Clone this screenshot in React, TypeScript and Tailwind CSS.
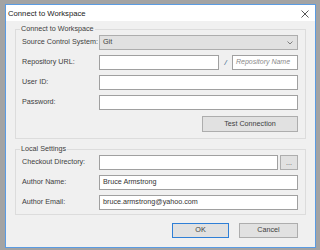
import React from 'react';

const font = { fontFamily: '"Liberation Sans", Arial, sans-serif' };

function Row({ label, children }: { label: string; children: React.ReactNode }) {
  return (
    <div className="flex items-center h-[15px]">
      <span className="w-[77px] shrink-0 whitespace-nowrap text-[7.2px] text-[#404040]">{label}</span>
      <div className="flex-1 flex items-center h-full">{children}</div>
    </div>
  );
}

function TextBox({ value, className = '' }: { value?: string; className?: string }) {
  return (
    <div className={`h-[15px] bg-white border border-[#a0a0a0] flex items-center pl-[3px] whitespace-nowrap text-[7.2px] text-[#333] ${className}`}>
      {value}
    </div>
  );
}

export default function App() {
  return (
    <div className="w-[320px] h-[250px] bg-[#a3a3a3] pt-[4px] pl-[5px]" style={font}>
      <div className="w-[311px] h-[244px] border border-[#5a9be2] bg-[#f0f0f0] flex flex-col">
        <div className="h-[16px] bg-white flex items-center justify-between pl-[2px] pr-[6px] pt-[1px]">
          <span className="text-[7.7px] text-[#222]">Connect to Workspace</span>
          <svg width="8" height="8" viewBox="0 0 8 8">
            <path d="M0.5 0.5 L7.5 7.5 M7.5 0.5 L0.5 7.5" stroke="#444" strokeWidth="0.9" />
          </svg>
        </div>

        <div className="pl-[9px] pt-[3px]">
          <fieldset className="w-[291px] border border-[#dcdcdc] pl-[6px] pr-[7px] pt-[1px] pb-[6px]">
            <legend className="ml-[-2px] px-[1px] text-[7.2px] leading-[10px] text-[#404040]">
              Connect to Workspace
            </legend>
            <div className="flex flex-col gap-[5px]">
              <Row label="Source Control System:">
                <div className="flex-1 h-[15px] bg-[#e1e1e1] border border-[#adadad] flex items-center justify-between pl-[3px] pr-[4px] text-[7.2px] text-[#404040]">
                  <span>Git</span>
                  <svg width="6" height="4" viewBox="0 0 6 4">
                    <path d="M0.5 0.5 L3 3 L5.5 0.5" fill="none" stroke="#666" strokeWidth="0.8" />
                  </svg>
                </div>
              </Row>
              <Row label="Repository URL:">
                <TextBox className="flex-1" />
                <span className="w-[13px] text-center text-[8px] italic text-[#3a5f8a]">/</span>
                <div className="w-[66px] h-[15px] bg-white border border-[#a0a0a0] flex items-center pl-[3px] whitespace-nowrap text-[7px] italic text-[#8a8a8a]">
                  Repository Name
                </div>
              </Row>
              <Row label="User ID:">
                <TextBox className="flex-1" />
              </Row>
              <Row label="Password:">
                <TextBox className="flex-1" />
              </Row>
            </div>
            <div className="flex justify-end mt-[6px]">
              <button className="w-[96px] h-[16px] bg-[#e1e1e1] border border-[#adadad] text-[7.2px] text-[#404040]">
                Test Connection
              </button>
            </div>
          </fieldset>

          <fieldset className="w-[291px] mt-[5px] border border-[#dcdcdc] pl-[6px] pr-[7px] pt-[1px] pb-[4px]">
            <legend className="ml-[-2px] px-[1px] text-[7.2px] leading-[10px] text-[#404040]">
              Local Settings
            </legend>
            <div className="flex flex-col gap-[5px]">
              <Row label="Checkout Directory:">
                <TextBox className="flex-1" />
                <button className="ml-[2px] w-[18px] h-[15px] bg-[#e1e1e1] border border-[#adadad] text-[7px] leading-[7px] text-[#555]">
                  ...
                </button>
              </Row>
              <Row label="Author Name:">
                <TextBox className="flex-1" value="Bruce Armstrong" />
              </Row>
              <Row label="Author Email:">
                <TextBox className="flex-1" value="bruce.armstrong@yahoo.com" />
              </Row>
            </div>
          </fieldset>

          <div className="w-[291px] flex justify-end gap-[10px] pr-[8px] mt-[8px]">
            <button className="w-[57px] h-[15px] bg-[#e1e1e1] border border-[#2f7fd6] text-[7.2px] text-[#404040]">
              OK
            </button>
            <button className="w-[59px] h-[15px] bg-[#e1e1e1] border border-[#adadad] text-[7.2px] text-[#404040]">
              Cancel
            </button>
          </div>
        </div>
      </div>
    </div>
  );
}
